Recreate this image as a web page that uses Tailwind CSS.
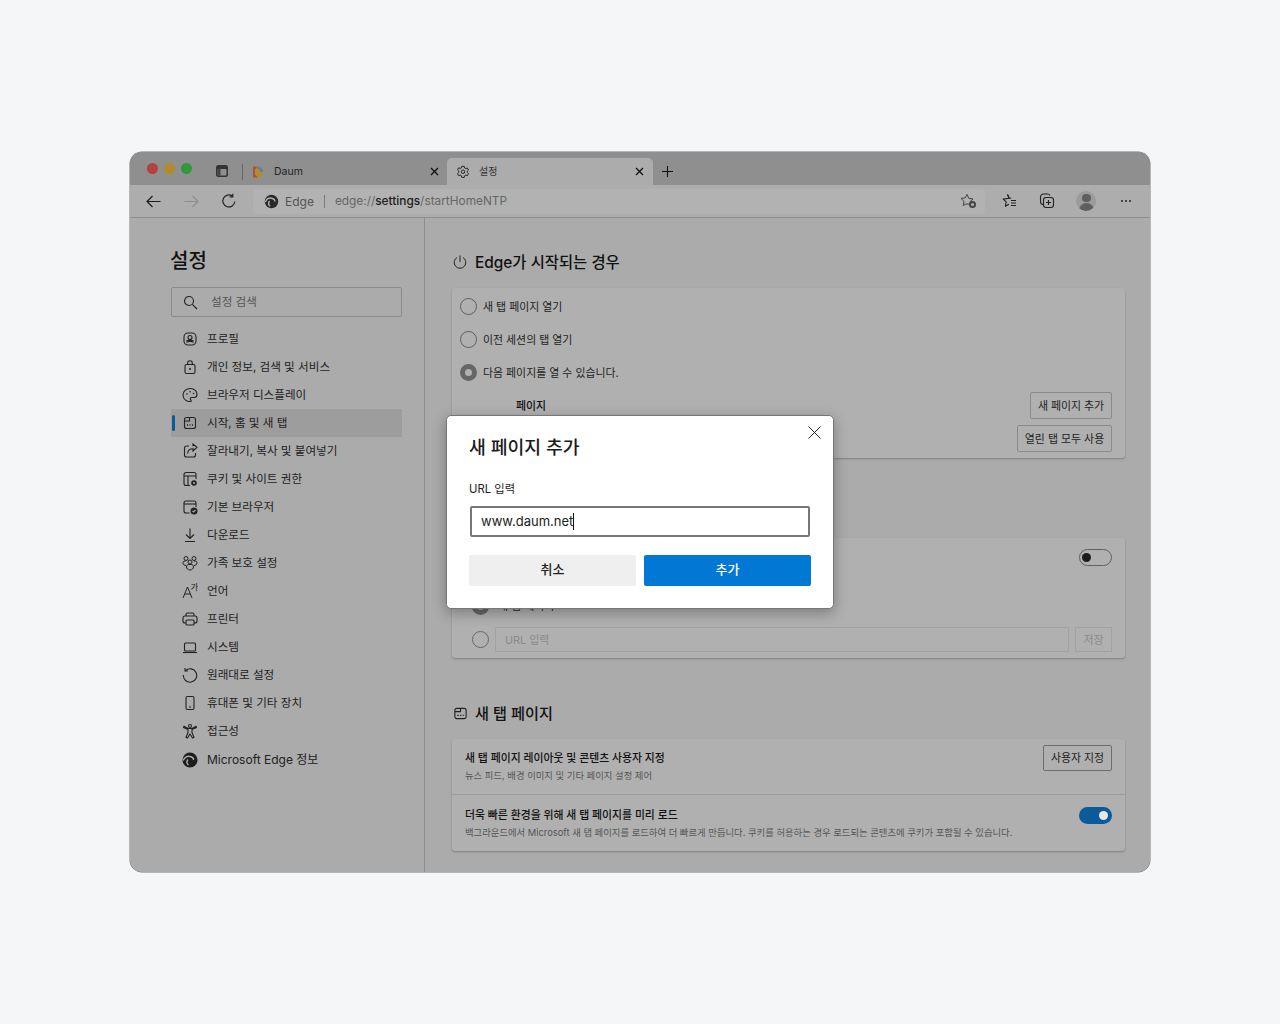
<!DOCTYPE html>
<html lang="ko">
<head>
  <meta charset="UTF-8" />
  <meta name="viewport" content="width=device-width, initial-scale=1.0"/>
  <title>설정</title>
  <script src="https://cdn.jsdelivr.net/npm/@tailwindcss/browser@4"></script>
</head>
<body class="bg-[#f5f6f8] text-[#1c1c1c] font-['Inter','Noto_Sans_CJK_KR',sans-serif]">
  <div class="h-[1024px] pt-[152px] pl-[130px]">
    <!-- WINDOW -->
    <div class="relative w-[1020px] h-[720px] rounded-[12px] overflow-hidden bg-[#ababab] ring-[0.5px] ring-[#777] flex flex-col">

      <!-- TAB STRIP -->
      <div class="h-[33px] shrink-0 bg-[#8f8f8f] flex items-end relative">
        <div class="flex items-center h-[27px] w-[316px] shrink-0">
          <div class="flex gap-[6px] pl-[17px] pb-[6px]">
            <span class="w-[11px] h-[11px] rounded-full bg-[#b3413d]"></span>
            <span class="w-[11px] h-[11px] rounded-full bg-[#b58a2a]"></span>
            <span class="w-[11px] h-[11px] rounded-full bg-[#2f9a3c]"></span>
          </div>
          <svg class="ml-[23px] mb-[1px]" width="14" height="14" viewBox="0 0 14 14" fill="none"><rect x="1" y="1" width="12" height="12" rx="2.5" fill="#333" /><rect x="2.5" y="5" width="9" height="6.5" rx="1" fill="#8f8f8f" /><rect x="2.5" y="5" width="3" height="6.5" fill="#444" /></svg>
          <span class="ml-[13px] w-px h-[16px] bg-[#666]"></span>
          <svg class="ml-[9px]" width="12" height="14" viewBox="0 0 12 14" fill="none"><path d="M1 1.5h4.5a5.5 5.5 0 0 1 0 11H1z" fill="#b5892f" /><path d="M1 1.5h4.5L3.5 4H3v6h.5l2 2.5H1z" fill="#a8524a" /><path d="M5.5 1.5a5.5 5.5 0 0 1 5.5 5.5H8.5A3 3 0 0 0 5.5 4z" fill="#5a7fa8" /></svg>
          <span class="ml-[10px] text-[10.5px] text-[#222]">Daum</span>
          <svg class="ml-auto mr-[7px]" width="9" height="9" viewBox="0 0 9 9" stroke="#111" stroke-width="1.3"><path d="M1 1l7 7M8 1l-7 7" /></svg>
        </div>
        <div class="w-[206px] h-[27px] ml-px bg-[#acacac] rounded-t-[5px] flex items-center pl-[9px] pr-[9px]">
          <svg width="14" height="14" viewBox="0 0 16 16" fill="none" stroke="#222" stroke-width="1.1"><path d="M6.6 1.5h2.800l.4 1.900 1.300.7 1.800-.7 1.400 2.400-1.400 1.300v1.500l1.400 1.300-1.400 2.400-1.800-.7-1.300.7-.4 1.900H6.600l-.4-1.900-1.300-.7-1.800.7-1.400-2.400 1.400-1.300V6.900L1.700 5.600l1.400-2.400 1.800.7 1.300-.7z" stroke-linejoin="round" /><circle cx="8" cy="7.700" r="2" /></svg>
          <span class="ml-[9px] text-[10px] text-[#333]">설정</span>
          <svg class="ml-auto" width="9" height="9" viewBox="0 0 9 9" stroke="#111" stroke-width="1.3"><path d="M1 1l7 7M8 1l-7 7" /></svg>
        </div>
        <svg class="ml-[8px] mb-[7px]" width="13" height="13" viewBox="0 0 13 13" stroke="#111" stroke-width="1.1"><path d="M6.5 1v11M1 6.500h11" /></svg>
      </div>

      <!-- TOOLBAR -->
      <div class="h-[33px] shrink-0 bg-[#adadad] border-b border-[#8f8f8f] flex items-center">
        <div class="w-[123px] flex items-center shrink-0">
          <svg class="ml-[16px]" width="15" height="13" viewBox="0 0 15 13" fill="none" stroke="#1c1c1c" stroke-width="1.2"><path d="M14.5 6.5H1M6.5 1L1 6.500 6.500 12" /></svg>
          <svg class="ml-[23px]" width="15" height="13" viewBox="0 0 15 13" fill="none" stroke="#8f8f8f" stroke-width="1.2"><path d="M.5 6.5H14M8.5 1L14 6.500 8.500 12" /></svg>
          <svg class="ml-[22px]" width="16" height="16" viewBox="0 0 16 16" fill="none" stroke="#222" stroke-width="1.2"><path d="M13.8 8.500A6 6 0 1 1 11.500 3.200" /><path d="M11.8.8v3h-3.100" /></svg>
        </div>
        <div class="w-[732px] h-[25px] bg-[#b2b2b2] rounded-[4px] flex items-center pl-[11px] text-[12px] shrink-0">
          <svg width="15" height="15" viewBox="0 0 16 16" fill="none"><circle cx="8" cy="8" r="7.2" fill="#2a2a2a" /><path d="M1.500 8.500C3 5 6 4 8 4.500c2.500.5 4 2 3.500 3.500" stroke="#b2b2b2" stroke-width="1.5" /><path d="M6 7.500c-1.500 1.500-1.500 4 .5 5.500" stroke="#b2b2b2" stroke-width="1.5" /></svg>
          <span class="ml-[6px] pt-[2px] text-[#555]">Edge</span>
          <span class="ml-[10px] w-px h-[13px] bg-[#7a7a7a]"></span>
          <span class="ml-[10px] pt-[2px] text-[11.85px] text-[#666]">edge://<span class="text-[#1c1c1c] font-medium">settings</span>/startHomeNTP</span>
          <svg class="ml-auto mr-[8px]" width="17" height="16" viewBox="0 0 17 16" fill="none" stroke="#444" stroke-width="1"><path d="M7 1.500l1.800 3.900 4.200.5-3 2.900.5 2.200H6l-2.800 1.500.8-4.200-3-2.900 4.200-.5z" stroke-linejoin="round" /><circle cx="12.500" cy="11.500" r="3.500" fill="#444" stroke="none" /><circle cx="12.500" cy="11.500" r="1.500" fill="#b2b2b2" stroke="none" /></svg>
        </div>
        <svg class="ml-[16px]" width="16" height="16" viewBox="0 0 16 16" fill="none" stroke="#222" stroke-width="1.1"><path d="M6.500 1.500L8.200 5.300l-6 .8 3 2.800-.8 4.300 3.500-2" stroke-linejoin="round" /><path d="M6.500 1.500L8.200 5.300h2" stroke-linejoin="round" /><path d="M10 7.500h5M10 10h5M10 12.500h5" /></svg>
        <svg class="ml-[22px]" width="16" height="16" viewBox="0 0 16 16" fill="none" stroke="#222" stroke-width="1.1"><path d="M4 11.500A3 3 0 0 1 1.500 8.500V4a3 3 0 0 1 3-3h4a3 3 0 0 1 2.500 1.500" /><rect x="4.500" y="4.500" width="10" height="10" rx="2.500" /><path d="M9.500 7v5M7 9.500h5" /></svg>
        <div class="ml-[21px] w-[20px] h-[20px] rounded-full bg-[#9b9b9b] overflow-hidden flex flex-col items-center">
          <span class="mt-[3px] w-[9px] h-[9px] rounded-full bg-[#5f5f5f]"></span>
          <span class="mt-[1px] w-[15px] h-[8px] rounded-t-full bg-[#5f5f5f]"></span>
        </div>
        <div class="ml-[25px] flex gap-[2px]">
          <span class="w-[2px] h-[2px] rounded-full bg-[#222]"></span>
          <span class="w-[2px] h-[2px] rounded-full bg-[#222]"></span>
          <span class="w-[2px] h-[2px] rounded-full bg-[#222]"></span>
        </div>
      </div>

      <!-- BODY -->
      <div class="flex flex-1 min-h-0">
        <!-- SIDEBAR -->
        <aside class="w-[295px] shrink-0 border-r border-[#8f8f8f] pl-[40px] pr-[22px] pt-[28px]">
          <h1 class="pt-px text-[20px] leading-[28px] font-medium text-[#111]">설정</h1>
          <div class="mt-[12px] ml-px h-[30px] border border-[#8c8c8c] rounded-[2px] flex items-center pl-[11px] text-[11.6px] text-[#555]">
            <svg width="15" height="15" viewBox="0 0 15 15" fill="none" stroke="#222" stroke-width="1.1"><circle cx="6" cy="6" r="4.5" /><path d="M9.300 9.300l4.700 4.700" /></svg>
            <span class="ml-[13px] pt-[2px]">설정 검색</span>
          </div>
          <nav class="mt-[8px] ml-px text-[11.6px] text-[#222] flex flex-col">
            <a class="h-[28px] flex items-center pl-[11px]">
              <svg class="shrink-0" width="16" height="16" viewBox="0 0 16 16" fill="none" stroke="#222" stroke-width="1.1"><rect x="2" y="2" width="12" height="12" rx="4" /><circle cx="8" cy="6.500" r="2" /><path d="M4.500 11.500c.5-1.500 6.500-1.500 7 0" /><path d="M4.500 9.500h7" /></svg>
              <span class="ml-[9px] pt-[2px]">프로필</span>
            </a>
            <a class="h-[28px] flex items-center pl-[11px]">
              <svg class="shrink-0" width="16" height="16" viewBox="0 0 16 16" fill="none" stroke="#222" stroke-width="1.1"><rect x="3" y="5.500" width="10" height="9" rx="1.500" /><path d="M5.700 5.500V4a2.300 2.300 0 0 1 4.600 0v1.500" /><circle cx="8" cy="10" r="1" fill="#222" stroke="none" /></svg>
              <span class="ml-[9px] pt-[2px]">개인 정보, 검색 및 서비스</span>
            </a>
            <a class="h-[28px] flex items-center pl-[11px]">
              <svg class="shrink-0" width="16" height="16" viewBox="0 0 16 16" fill="none" stroke="#222" stroke-width="1.1"><path d="M9 14.500c-4 .5-8-2-8-6.500C1 4.500 4 1.500 8.500 1.500c3.500 0 6.500 2.500 6.500 6 0 2-1.500 3-3 3H9.500c-1 0-1.500 1-1 1.800.3.600 1.200 1.900.5 2.200z" /><circle cx="5" cy="7" r=".8" fill="#222" stroke="none" /><circle cx="8" cy="4.800" r=".8" fill="#222" stroke="none" /><circle cx="11.500" cy="6.500" r=".8" fill="#222" stroke="none" /></svg>
              <span class="ml-[9px] pt-[2px]">브라우저 디스플레이</span>
            </a>
            <a class="relative h-[28px] flex items-center pl-[11px] bg-[#9d9d9d]">
              <span class="absolute left-[1px] top-[6px] w-[3px] h-[16px] rounded-full bg-[#0b5a9a]"></span>
              <svg class="shrink-0" width="16" height="16" viewBox="0 0 16 16" fill="none" stroke="#222" stroke-width="1.1"><rect x="2.500" y="2.500" width="11" height="11" rx="2" /><path d="M2.500 6h5V2.500" /><path d="M5 10h1M7.500 10h1M10 10h1" stroke-width="1.300" /></svg>
              <span class="ml-[9px] pt-[2px]">시작, 홈 및 새 탭</span>
            </a>
            <a class="h-[28px] flex items-center pl-[11px]">
              <svg class="shrink-0" width="16" height="16" viewBox="0 0 16 16" fill="none" stroke="#222" stroke-width="1.1"><path d="M7 3H4.500a2 2 0 0 0-2 2v7a2 2 0 0 0 2 2h7a2 2 0 0 0 2-2v-2" /><path d="M5.500 10.500c.3-3 2.500-4.800 5.500-4.800V8l4-3.800L11 1v2.300" /></svg>
              <span class="ml-[9px] pt-[2px]">잘라내기, 복사 및 붙여넣기</span>
            </a>
            <a class="h-[28px] flex items-center pl-[11px]">
              <svg class="shrink-0" width="16" height="16" viewBox="0 0 16 16" fill="none" stroke="#222" stroke-width="1.1"><path d="M8 14.500H4a2 2 0 0 1-2-2v-9a2 2 0 0 1 2-2h8a2 2 0 0 1 2 2V8" /><path d="M2 5h12M6 5v9.500" /><circle cx="12" cy="12" r="2.800" fill="#222" stroke="none" /><circle cx="12" cy="12" r="1" fill="#ababab" stroke="none" /></svg>
              <span class="ml-[9px] pt-[2px]">쿠키 및 사이트 권한</span>
            </a>
            <a class="h-[28px] flex items-center pl-[11px]">
              <svg class="shrink-0" width="16" height="16" viewBox="0 0 16 16" fill="none" stroke="#222" stroke-width="1.1"><path d="M7.500 14H4a2 2 0 0 1-2-2V4a2 2 0 0 1 2-2h8a2 2 0 0 1 2 2v4" /><path d="M2 5h12" /><circle cx="12" cy="12" r="3.500" fill="#222" stroke="none" /><path d="M10.500 12l1 1 2-2" stroke="#ababab" /></svg>
              <span class="ml-[9px] pt-[2px]">기본 브라우저</span>
            </a>
            <a class="h-[28px] flex items-center pl-[11px]">
              <svg class="shrink-0" width="16" height="16" viewBox="0 0 16 16" fill="none" stroke="#222" stroke-width="1.1"><path d="M8 1.500v10M4 7.500l4 4 4-4M3 14.500h10" /></svg>
              <span class="ml-[9px] pt-[2px]">다운로드</span>
            </a>
            <a class="h-[28px] flex items-center pl-[11px]">
              <svg class="shrink-0" width="16" height="16" viewBox="0 0 16 16" fill="none" stroke="#222" stroke-width="1"><circle cx="4" cy="3.500" r="2" /><circle cx="12" cy="3.500" r="2" /><circle cx="8" cy="7" r="2" /><path d="M1 8c0-1.500 1-2 2-2h1M15 8c0-1.500-1-2-2-2h-1M1 8c0 1.500 1.500 2.500 3 2.500M15 8c0 1.500-1.500 2.500-3 2.500" /><path d="M4.500 12c0-1.500 1-2.500 2-2.500h3c1 0 2 1 2 2.500s-1.500 3-3.500 3-3.500-1.500-3.500-3z" /></svg>
              <span class="ml-[9px] pt-[2px]">가족 보호 설정</span>
            </a>
            <a class="h-[28px] flex items-center pl-[11px]">
              <svg class="shrink-0" width="16" height="16" viewBox="0 0 16 16" fill="none" stroke="#222" stroke-width="1"><path d="M1 15L5.500 4 10 15M2.800 11h5.500" /><text x="8.500" y="7" font-size="8.500" fill="#222" stroke="none">가</text></svg>
              <span class="ml-[9px] pt-[2px]">언어</span>
            </a>
            <a class="h-[28px] flex items-center pl-[11px]">
              <svg class="shrink-0" width="16" height="16" viewBox="0 0 16 16" fill="none" stroke="#222" stroke-width="1.1"><path d="M4 5V3.500A1.500 1.500 0 0 1 5.500 2h5A1.500 1.500 0 0 1 12 3.500V5" /><path d="M4 12H3a2 2 0 0 1-2-2V7a2 2 0 0 1 2-2h10a2 2 0 0 1 2 2v3a2 2 0 0 1-2 2h-1" /><rect x="4" y="9" width="8" height="5" rx="1" /></svg>
              <span class="ml-[9px] pt-[2px]">프린터</span>
            </a>
            <a class="h-[28px] flex items-center pl-[11px]">
              <svg class="shrink-0" width="16" height="16" viewBox="0 0 16 16" fill="none" stroke="#222" stroke-width="1.1"><rect x="2.500" y="4" width="11" height="8" rx="1" /><path d="M1 13.500h14" /></svg>
              <span class="ml-[9px] pt-[2px]">시스템</span>
            </a>
            <a class="h-[28px] flex items-center pl-[11px]">
              <svg class="shrink-0" width="16" height="16" viewBox="0 0 16 16" fill="none" stroke="#222" stroke-width="1.1"><path d="M3.500 3.500A6.700 6.700 0 1 1 1.300 8" /><path d="M3 1v3h3" /></svg>
              <span class="ml-[9px] pt-[2px]">원래대로 설정</span>
            </a>
            <a class="h-[28px] flex items-center pl-[11px]">
              <svg class="shrink-0" width="16" height="16" viewBox="0 0 16 16" fill="none" stroke="#222" stroke-width="1.1"><rect x="4" y="1.500" width="8" height="13" rx="1.500" /><path d="M7 12h2" /></svg>
              <span class="ml-[9px] pt-[2px]">휴대폰 및 기타 장치</span>
            </a>
            <a class="h-[28px] flex items-center pl-[11px]">
              <svg class="shrink-0" width="16" height="16" viewBox="0 0 16 16" fill="none" stroke="#222" stroke-width="1.1"><circle cx="8" cy="3" r="1.500" /><path d="M1.500 4.500L6 6.500v3L4 14.500l1.500.5L8 11l2.500 4 1.500-.5-2-5v-3l4.500-2-.5-1.300L10 5.500H6L2 3.200z" stroke-linejoin="round" /></svg>
              <span class="ml-[9px] pt-[2px]">접근성</span>
            </a>
            <a class="mt-px h-[28px] flex items-center pl-[11px] text-[12px]">
              <svg class="shrink-0" width="16" height="16" viewBox="0 0 16 16" fill="none"><circle cx="8" cy="8" r="7.500" fill="#1c1c1c" /><path d="M1.200 8.500C3 5 6 4 8 4.500c2.500.5 4 2 3.500 3.500" stroke="#ababab" stroke-width="1.500" /><path d="M6 7.500c-1.500 1.500-1.500 4 .5 5.500" stroke="#ababab" stroke-width="1.500" /></svg>
              <span class="ml-[9px]">Microsoft Edge 정보</span>
            </a>
          </nav>
        </aside>

        <!-- MAIN -->
        <main class="w-[673px] ml-[27px] shrink-0 pt-[29px]">
          <h2 class="h-[30px] flex items-center text-[15.4px] font-medium text-[#111]">
            <svg width="16" height="16" viewBox="0 0 16 16" fill="none" stroke="#222" stroke-width="1"><path d="M8 1.500v6.500" /><path d="M5 3.500a5.800 5.800 0 1 0 6 0" /></svg>
            <span class="ml-[7px] pt-[2px]">Edge가 시작되는 경우</span>
          </h2>
          <section class="mt-[11px] h-[170px] bg-[#b0b0b0] rounded-[3px] shadow-[0_1px_2px_rgba(0,0,0,0.25)] pt-[2px] text-[10.9px] text-[#222]">
            <div class="h-[33px] flex items-center pl-[8px]">
              <span class="w-[17px] h-[17px] rounded-full border border-[#5e5e5e]"></span>
              <span class="ml-[6px] pt-[2px]">새 탭 페이지 열기</span>
            </div>
            <div class="h-[33px] flex items-center pl-[8px]">
              <span class="w-[17px] h-[17px] rounded-full border border-[#5e5e5e]"></span>
              <span class="ml-[6px] pt-[2px]">이전 세션의 탭 열기</span>
            </div>
            <div class="h-[33px] flex items-center pl-[8px]">
              <span class="w-[17px] h-[17px] rounded-full border-[5px] border-[#666]"></span>
              <span class="ml-[6px] pt-[2px]">다음 페이지를 열 수 있습니다.</span>
            </div>
            <div class="mt-[3px] h-[27px] flex items-center justify-between pl-[64px] pr-[13px]">
              <span class="pt-[2px] font-medium text-[#111]">페이지</span>
              <button class="h-[27px] w-[82px] pt-[2px] border border-[#8a8a8a] rounded-[2px] text-[#222]">새 페이지 추가</button>
            </div>
            <div class="mt-[6px] flex justify-end pr-[13px]">
              <button class="h-[27px] w-[95px] pt-[2px] border border-[#8a8a8a] rounded-[2px] text-[#222]">열린 탭 모두 사용</button>
            </div>
          </section>

          <section class="mt-[80px] h-[120px] bg-[#b0b0b0] rounded-[3px] shadow-[0_1px_2px_rgba(0,0,0,0.25)] pt-[11px] pb-[6px] flex flex-col text-[10.9px]">
            <div class="flex justify-end pr-[13px]">
              <span class="w-[33px] h-[17px] rounded-full border border-[#5e5e5e] flex items-center pl-[2px]"><span class="w-[9px] h-[9px] rounded-full bg-[#1c1c1c]"></span></span>
            </div>
            <div class="mt-auto flex items-center pl-[20px] h-[20px]">
              <span class="w-[17px] h-[17px] rounded-full border-[5px] border-[#666]"></span>
              <span class="ml-[9px] text-[#222]">새 탭 페이지</span>
            </div>
            <div class="mt-[11px] flex items-center pl-[20px] pr-[13px]">
              <span class="w-[17px] h-[17px] rounded-full border border-[#666] shrink-0"></span>
              <div class="ml-[6px] flex-1 h-[25px] pt-[2px] border border-[#a2a2a2] flex items-center pl-[9px] text-[#8a8a8a]">URL 입력</div>
              <div class="ml-[6px] w-[37px] h-[25px] pt-[2px] border border-[#a2a2a2] flex items-center justify-center text-[#8a8a8a]">저장</div>
            </div>
          </section>

          <h2 class="mt-[40px] h-[30px] flex items-center text-[15.2px] font-medium text-[#111]">
            <svg class="ml-px" width="15" height="15" viewBox="0 0 16 16" fill="none" stroke="#222" stroke-width="1.2"><rect x="2" y="2.500" width="12" height="11" rx="2" /><path d="M2 6h6V2.500" /><path d="M4.500 10h1.500M7.500 10h1.500M10.500 10h1" stroke-width="1.300" /></svg>
            <span class="ml-[7px] pt-[2px]">새 탭 페이지</span>
          </h2>
          <section class="mt-[11px] h-[112px] bg-[#b0b0b0] rounded-[3px] shadow-[0_1px_2px_rgba(0,0,0,0.25)] flex flex-col">
            <div class="h-[56px] flex justify-between pl-[13px] pr-[13px] pt-[6px] border-b border-[#9c9c9c]">
              <div>
                <div class="text-[10.85px] leading-[26px] font-medium text-[#111]">새 탭 페이지 레이아웃 및 콘텐츠 사용자 지정</div>
                <div class="text-[9.35px] leading-[10px] text-[#555]">뉴스 피드, 배경 이미지 및 기타 페이지 설정 제어</div>
              </div>
              <button class="h-[26px] w-[69px] pt-px border border-[#6e6e6e] rounded-[2px] text-[10.9px] text-[#222]">사용자 지정</button>
            </div>
            <div class="flex-1 flex justify-between pl-[13px] pr-[13px] pt-[7px]">
              <div>
                <div class="text-[10.85px] leading-[26px] font-medium text-[#111]">더욱 빠른 환경을 위해 새 탭 페이지를 미리 로드</div>
                <div class="text-[9.35px] leading-[10px] text-[#555]">백그라운드에서 Microsoft 새 탭 페이지를 로드하여 더 빠르게 만듭니다. 쿠키를 허용하는 경우 로드되는 콘텐츠에 쿠키가 포함될 수 있습니다.</div>
              </div>
              <span class="mt-[5px] w-[33px] h-[17px] rounded-full bg-[#0b5a9a] flex items-center justify-end pr-[4px]"><span class="w-[9px] h-[9px] rounded-full bg-[#e8e8e8]"></span></span>
            </div>
          </section>
        </main>
      </div>

      <!-- DIALOG -->
      <div class="absolute left-[316px] top-[263px] w-[388px] h-[194px] bg-white rounded-[5px] border border-[#777] shadow-[0_4px_14px_rgba(0,0,0,0.3)] pl-[22px] pr-[22px] pt-[16px]">
        <svg class="absolute right-[12px] top-[10px]" width="13" height="13" viewBox="0 0 13 13" stroke="#222" stroke-width="1"><path d="M.5.5l12 12M12.500.5l-12 12" /></svg>
        <h3 class="text-[18.3px] leading-[30px] font-medium text-[#1a1a1a]">새 페이지 추가</h3>
        <div class="mt-[18px] text-[11.3px] leading-[18px] text-[#222]">URL 입력</div>
        <div class="mt-[8px] ml-px w-[340px] h-[31px] border-2 border-[#777] rounded-[2px] flex items-center pl-[9px] text-[13px] text-[#222]">www.daum.net<span class="w-px h-[17px] bg-[#111]"></span></div>
        <div class="mt-[18px] flex gap-[8px]">
          <button class="w-[167px] h-[31px] pb-px bg-[#efefef] rounded-[2px] text-[13px] font-medium text-[#222]">취소</button>
          <button class="w-[167px] h-[31px] pb-px bg-[#0078d4] rounded-[2px] text-[13px] font-medium text-white">추가</button>
        </div>
      </div>
    </div>
  </div>
</body>
</html>
